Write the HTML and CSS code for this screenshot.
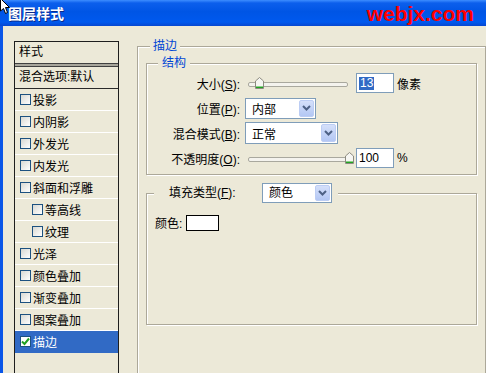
FILE: index.html
```html
<!DOCTYPE html>
<html lang="zh-CN">
<head>
    <meta charset="UTF-8">
    <meta name="viewport" content="width=device-width, initial-scale=1.0">
    <title>图层样式</title>
    <link rel="stylesheet" href="styles.css">
</head>
<body>

    <div class="titlebar">
        <svg class="cursor" width="12" height="16" viewBox="0 0 12 16">
            <path d="M0.5 -1.5 L0.5 11 L3.5 8.5 L5.5 13.5 L7.5 12.5 L5.5 7.5 L9.5 7.5 Z" fill="#fff" stroke="#000" stroke-width="1"/>
        </svg>
        <span class="title">图层样式</span>
        <span class="brand">webjx.com</span>
    </div>

    <div class="main">
        <!-- style list on the left -->
        <div class="styles-list">
            <div class="list-head">样式</div>
            <div class="list-rule"></div>
            <div class="list-blend">混合选项:默认</div>
            <div class="list-item"><span class="check"></span>投影</div>
            <div class="list-item"><span class="check"></span>内阴影</div>
            <div class="list-item"><span class="check"></span>外发光</div>
            <div class="list-item"><span class="check"></span>内发光</div>
            <div class="list-item"><span class="check"></span>斜面和浮雕</div>
            <div class="list-item sub"><span class="check"></span>等高线</div>
            <div class="list-item sub"><span class="check"></span>纹理</div>
            <div class="list-item"><span class="check"></span>光泽</div>
            <div class="list-item"><span class="check"></span>颜色叠加</div>
            <div class="list-item"><span class="check"></span>渐变叠加</div>
            <div class="list-item"><span class="check"></span>图案叠加</div>
            <div class="list-item selected">
                <span class="check on">
                    <svg width="9" height="9" viewBox="0 0 9 9"><path d="M1 4.5 L3.5 7 L8 1.5" fill="none" stroke="#21a121" stroke-width="2"/></svg>
                </span>描边
            </div>
        </div>

        <!-- stroke settings -->
        <fieldset class="group outer">
            <legend>描边</legend>

            <fieldset class="group struct">
                <legend>结构</legend>
                <div class="rows">
                    <div class="row">
                        <span class="lbl">大小(<u>S</u>):</span>
                        <div class="slider"><span class="thumb" style="left: 10px;"><svg width="9" height="12" viewBox="0 0 9 12"><path d="M0.5 4 L4.5 0.5 L8.5 4 L8.5 11.5 L0.5 11.5 Z" fill="#f6f6f2" stroke="#8c8b80"/><rect x="1" y="9.5" width="7" height="1.5" fill="#22a322"/></svg></span></div>
                        <span class="num"><span class="sel">13</span></span>
                        <span class="unit">像素</span>
                    </div>
                    <div class="row">
                        <span class="lbl">位置(<u>P</u>):</span>
                        <div class="select select-pos">
                            <span>内部</span>
                            <span class="select-btn"><svg width="9" height="6" viewBox="0 0 9 6"><path d="M1 1 L4.5 4.5 L8 1" fill="none" stroke="#4d6185" stroke-width="2"/></svg></span>
                        </div>
                    </div>
                    <div class="row">
                        <span class="lbl">混合模式(<u>B</u>):</span>
                        <div class="select select-mode">
                            <span>正常</span>
                            <span class="select-btn"><svg width="9" height="6" viewBox="0 0 9 6"><path d="M1 1 L4.5 4.5 L8 1" fill="none" stroke="#4d6185" stroke-width="2"/></svg></span>
                        </div>
                    </div>
                    <div class="row">
                        <span class="lbl">不透明度(<u>O</u>):</span>
                        <div class="slider"><span class="thumb" style="left: 100px;"><svg width="9" height="12" viewBox="0 0 9 12"><path d="M0.5 4 L4.5 0.5 L8.5 4 L8.5 11.5 L0.5 11.5 Z" fill="#f6f6f2" stroke="#8c8b80"/><rect x="1" y="9.5" width="7" height="1.5" fill="#22a322"/></svg></span></div>
                        <span class="num">100</span>
                        <span class="unit">%</span>
                    </div>
                </div>
            </fieldset>

            <fieldset class="group fill">
                <legend>
                    <div class="legend-row">
                        <span class="fill-lbl">填充类型(<u>F</u>):</span>
                        <div class="select select-fill">
                            <span>颜色</span>
                            <span class="select-btn"><svg width="9" height="6" viewBox="0 0 9 6"><path d="M1 1 L4.5 4.5 L8 1" fill="none" stroke="#4d6185" stroke-width="2"/></svg></span>
                        </div>
                    </div>
                </legend>
                <div class="fill-body">
                    <div class="color-row">
                        <span>颜色:</span>
                        <span class="swatch"></span>
                    </div>
                </div>
            </fieldset>
        </fieldset>
    </div>

</body>
</html>
```

FILE: styles.css
```css
* {
    box-sizing: border-box;
}

body {
    margin: 0;
    width: 486px;
    height: 373px;
    overflow: hidden;
    background: #ece9d8;
    font: 12px "Liberation Sans", "Noto Sans CJK SC", sans-serif;
    color: #000;
}

/* window title */
.titlebar {
    position: relative;
    height: 26px;
    display: flex;
    align-items: center;
    justify-content: space-between;
    padding: 0 12px 0 8px;
    background: linear-gradient(#3d8dff 0, #0c5fec 3px, #0055e5 45%, #0059ee 85%, #0747d0 100%);
}

.cursor {
    position: absolute;
    left: 0;
    top: 0;
}

.title {
    font: bold 14px "Noto Sans CJK SC", sans-serif;
    color: #fff;
    text-shadow: 1px 1px 0 #0a2a8a;
    margin-top: -1px;
}

.brand {
    font: bold 21px "Liberation Sans", Arial, sans-serif;
    color: #ff0000;
    margin-top: 2px;
}

.main {
    display: flex;
    align-items: flex-start;
    height: 347px;
    overflow: hidden;
    border-left: 3px solid #0a56e8;
}

/* left list */
.styles-list {
    width: 105px;
    min-height: 340px;
    margin: 15px 0 0 11px;
    border: 1px solid #1e1e1e;
    border-bottom: none;
    flex-shrink: 0;
}

.list-head,
.list-blend {
    height: 21px;
    line-height: 21px;
    padding-left: 4px;
}

.list-rule {
    height: 4px;
    border-top: 1px solid #404040;
    border-bottom: 1px solid #404040;
    background: #a8a69c;
}

.list-blend {
    height: 22px;
    border-bottom: 1px solid #2a2a2a;
}

.list-item {
    height: 22px;
    display: flex;
    align-items: center;
    gap: 2px;
    padding-left: 5px;
    border-bottom: 1px solid #fff;
}

.list-item.sub {
    padding-left: 17px;
}

.list-item.selected {
    background: #316ac5;
    color: #fff;
    border-bottom-color: #316ac5;
}

.check {
    width: 11px;
    height: 11px;
    border: 1px solid #1c5180;
    background: linear-gradient(135deg, #d8d8d2, #fff);
    display: flex;
    align-items: center;
    justify-content: center;
}

.check.on {
    background: #fff;
}

/* group boxes */
.group {
    margin: 0;
    padding: 0;
    min-width: 0;
    border: 1px solid #aca899;
    box-shadow: inset 1px 1px 0 #fff, 1px 1px 0 #fff;
}

.group legend {
    padding: 0 3px;
    margin-left: 12px;
    line-height: 14px;
    color: #0046d5;
    background: #ece9d8;
}

.outer {
    width: 349px;
    height: 360px;
    margin: 13px 0 0 18px;
    flex-shrink: 0;
}

.struct {
    margin: 3px 8px 0;
}

.struct legend {
    margin-left: 11px;
    padding: 0 4px;
}

.rows {
    padding: 2px 0 5px;
}

.row {
    height: 22px;
    display: flex;
    align-items: center;
    margin-bottom: 3px;
}

.row:last-child {
    margin-bottom: 0;
}

.lbl {
    width: 93px;
    text-align: right;
    flex-shrink: 0;
}

/* slider */
.slider {
    position: relative;
    width: 105px;
    height: 14px;
    margin-left: 5px;
}

.slider::before {
    content: "";
    position: absolute;
    left: 3px;
    right: 2px;
    top: 6px;
    height: 3px;
    border: 1px solid #a9a89e;
    border-radius: 2px;
    background: #f4f3ee;
}

.thumb {
    position: absolute;
    top: 1px;
    width: 9px;
    height: 12px;
    display: block;
}

.thumb svg {
    display: block;
}

.num {
    width: 38px;
    height: 20px;
    margin-left: 6px;
    padding-left: 2px;
    border: 1px solid #7f9db9;
    background: #fff;
    display: flex;
    align-items: center;
}

.sel {
    background: #316ac5;
    color: #fff;
    line-height: 13px;
    padding: 0 1px;
}

.unit {
    margin-left: 3px;
}

/* drop-down boxes */
.select {
    height: 21px;
    display: flex;
    align-items: center;
    justify-content: space-between;
    margin-left: 5px;
    padding: 1px 1px 1px 6px;
    border: 1px solid #7f9db9;
    background: #fff;
    color: #000;
}

.select-pos {
    width: 71px;
}

.select-mode {
    width: 93px;
    height: 22px;
}

.select-fill {
    width: 70px;
    height: 20px;
    margin-left: 0;
}

.select-btn {
    width: 15px;
    height: 100%;
    border: 1px solid #bccdf4;
    border-radius: 2px;
    background: linear-gradient(#d5e0fa, #b3c7f4);
    display: flex;
    align-items: center;
    justify-content: center;
}

/* fill group */
.fill {
    margin: 8px 8px 0;
}

.fill legend {
    margin-left: 7px;
    padding: 0 6px 0 15px;
    color: #000;
}

.legend-row {
    display: flex;
    align-items: center;
    height: 20px;
}

.fill-lbl {
    width: 93px;
}

.fill-body {
    height: 121px;
    padding: 11px 0 0 8px;
}

.color-row {
    height: 17px;
    display: flex;
    align-items: center;
}

.swatch {
    width: 33px;
    height: 16px;
    margin-left: 4px;
    border: 1px solid #000;
    background: #fff;
}
```
